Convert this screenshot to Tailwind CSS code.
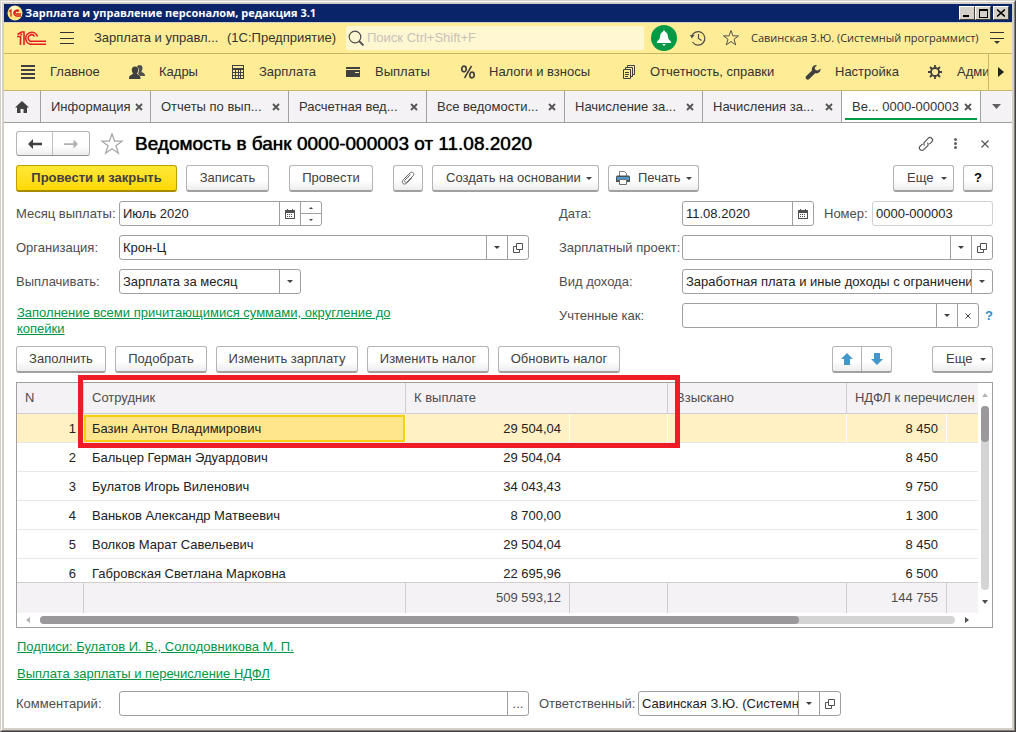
<!DOCTYPE html>
<html lang="ru">
<head>
<meta charset="utf-8">
<title>Зарплата и управление персоналом, редакция 3.1</title>
<script src="https://cdn.jsdelivr.net/npm/@tailwindcss/browser@4"></script>
</head>
<body class="flex min-h-screen flex-col border border-[#d4d0c8] border-r-[#404040] border-b-[#404040] bg-[#d4d0c8] font-['Liberation_Sans',Arial,sans-serif] text-[13px] leading-4 text-[#333333]">
<svg class="hidden">
  <symbol id="down" viewBox="0 0 6 3"><path d="M0 0h6L3 3z" fill="#404040"/></symbol>
  <symbol id="open" viewBox="0 0 10 10"><path d="M3.500.5h6v6h-6zM3.500 3.500h-3v6h6v-3" fill="none" stroke="#505050"/></symbol>
  <symbol id="cal" viewBox="0 0 10 10"><path d="M0 1h10v9H0z" fill="#505050"/><path d="M1 4h8v5H1z" fill="#fff"/><path d="M2 0h1v2H2zM7 0h1v2H7zM2 5h1v1H2zM4 5h1v1H4zM6 5h1v1H6zM2 7h1v1H2zM4 7h1v1H4zM6 7h1v1H6z" fill="#505050"/></symbol>
  <symbol id="x" viewBox="0 0 8 8"><path d="M1 1l6 6M7 1L1 7" fill="none" stroke="#555" stroke-width="1.800"/></symbol>
  <symbol id="star" viewBox="0 0 24 24"><path d="M12 2l2.600 7.200h7.400l-6 4.500 2.300 7.500L12 16.700l-6.300 4.500L8 13.700 2 9.200h7.400z" fill="none" stroke="currentColor" stroke-width="1.300"/></symbol>
</svg>

<div class="flex grow flex-col border border-white border-r-[#808080] border-b-[#808080] p-0.5">

<header>
  <div class="flex h-[18px] items-center bg-[#0a246a] pr-[3px] pl-[3px]">
    <svg class="size-4 shrink-0" viewBox="0 0 16 16"><circle cx="8" cy="8" r="7.500" fill="#ffe680"/><circle cx="7" cy="5" r="4" fill="#fff6c8"/><path d="M2 6.500l2-1.500v6.500M12 6a3 3 0 1 0-2.500 5H14M11 7a1.500 1.500 0 1 0-1.500 2H14" fill="none" stroke="#d81e1e" stroke-width="1.300"/></svg>
    <h1 class="ml-0.5 grow font-['Open_Sans','Noto_Sans',sans-serif] text-[11px] font-bold text-white">Зарплата и управление персоналом, редакция 3.1</h1>
    <button aria-label="Свернуть" class="flex h-[14px] w-4 items-end border border-white border-r-[#404040] border-b-[#404040] bg-[#d4d0c8] pb-0.5 pl-[3px]"><span class="h-0.5 w-1.5 bg-black"></span></button>
    <button aria-label="Развернуть" class="flex h-[14px] w-4 items-center justify-center border border-white border-r-[#404040] border-b-[#404040] bg-[#d4d0c8]"><span class="h-[9px] w-[9px] border border-t-2 border-black"></span></button>
    <button aria-label="Закрыть" class="ml-0.5 flex h-[14px] w-4 items-center justify-center border border-white border-r-[#404040] border-b-[#404040] bg-[#d4d0c8]"><svg class="size-2" viewBox="0 0 8 8"><path d="M0 .5l8 7M8 .5l-8 7" stroke="#000" stroke-width="1.600"/></svg></button>
  </div>

  <div class="flex h-8 items-center border-t border-b border-t-[#d4d0c8] border-b-[#c9b768] bg-[#ffec96] pr-2 pl-[13px]">
    <svg class="h-[14px] w-[29px] shrink-0" viewBox="0 0 29 14"><path d="M0.500 3.500L4.500 1h2.500v13M0 5.500h3.500V14M3.500 4L5 3M20.500 5.500A6 6 0 1 0 15 13.300h14M17.500 5.500A3.300 3.300 0 1 0 15 10.300h14" fill="none" stroke="#e31e24" stroke-width="1.600"/></svg>
    <button aria-label="Меню" class="ml-[14px] flex h-3 w-[14px] flex-col justify-between"><span class="h-px w-full bg-[#333]"></span><span class="h-px w-full bg-[#333]"></span><span class="h-px w-full bg-[#333]"></span></button>
    <span class="ml-5 w-[133px] whitespace-nowrap">Зарплата и управл...</span>
    <span class="w-[119px] whitespace-nowrap">(1С:Предприятие)</span>
    <label class="flex h-6 grow items-center rounded-xs bg-[#fff6d2] pl-0.5">
      <svg class="size-4 shrink-0" viewBox="0 0 16 16"><circle cx="7" cy="7" r="5.800" fill="none" stroke="#4d4d4d" stroke-width="1.200"/><path d="M11 11l4.500 4.500" stroke="#4d4d4d" stroke-width="1.800"/></svg>
      <input aria-label="Поиск" type="search" placeholder="Поиск Ctrl+Shift+F" class="ml-[3px] w-0 grow outline-none placeholder:text-[#c6c3b8]">
    </label>
    <button aria-label="Уведомления" class="ml-[7px] flex size-[26px] shrink-0 items-center justify-center rounded-full bg-[#009a46]"><svg class="size-4" viewBox="0 0 16 16"><path d="M8 .5c-.8 0-1 .6-1 1.200C5 2.300 4.400 4 4.200 6 4 8.500 3 10 1 11.500V13h14v-1.500C13 10 12 8.500 11.800 6 11.600 4 11 2.300 9 1.700 9 1.100 8.800.5 8 .5zM6.500 14h3c0 2-3 2-3 0z" fill="#fff"/></svg></button>
    <button aria-label="История" class="ml-[13px] shrink-0"><svg class="size-4" viewBox="0 0 16 16"><path d="M1.700 6.500A6.700 6.700 0 1 1 2.500 12M8.500 4v4.500l3 2" fill="none" stroke="#4d4d4d" stroke-width="1.200"/><path d="M0 5h4.500L1.800 8.500z" fill="#4d4d4d"/></svg></button>
    <button aria-label="Избранное" class="ml-4 shrink-0 text-[#4d4d4d]"><svg class="size-[18px]"><use href="#star"/></svg></button>
    <a href="#" class="ml-[11px] w-[229px] font-['Open_Sans','Noto_Sans',sans-serif] text-[11px] whitespace-nowrap">Савинская З.Ю. (Системный программист)</a>
    <button aria-label="Настройка панели" class="ml-2.5 shrink-0"><svg class="h-[14px] w-[14px]" viewBox="0 0 14 14"><path d="M0 1.500h14M0 7.500h14" stroke="#333"/><path d="M4 10h6l-3 3z" fill="#333"/></svg></button>
  </div>

  <nav class="flex h-[37px] items-stretch border-b border-[#c9b768] bg-[#ffec96] text-[13px]">
    <div class="grid w-0 grow grid-cols-[108px_102px_115px_115px_161px_183px_123px_60px] items-center overflow-hidden pl-[17px] whitespace-nowrap">
      <a href="#" class="flex items-center gap-[15px]"><svg class="size-[14px] shrink-0" viewBox="0 0 14 14"><path d="M0 1h14M0 5h14M0 9h14M0 13h14" stroke="#404040" stroke-width="2"/></svg>Главное</a>
      <a href="#" class="flex items-center gap-[14px]"><svg class="size-4 shrink-0" viewBox="0 0 16 16"><path d="M10.500 1c2 0 3 1 3 3s-.8 3-1 3.500c0 1 3.500 1 3.500 4v.5h-5c-.8-1.500-2-2-2-2.500C10.500 7 10 4 8 3c.3-1.300 1.200-2 2.500-2z" fill="#505050"/><path d="M6 2.500c2.300 0 3.200 1.500 3.200 3.500 0 1.500-.8 2.700-1.200 3.500 0 1.300 3.500 1.200 3.500 4.500v1H0v-1c0-3.300 4-3.200 4-4.500C3.500 8.700 2.800 7.500 2.800 6c0-2 1-3.500 3.200-3.500z" fill="#404040"/></svg>Кадры</a>
      <a href="#" class="flex items-center gap-[14px]"><svg class="size-[14px] shrink-0" viewBox="0 0 14 14"><path d="M1 0h12v14H1z" fill="#404040"/><path d="M2 1h10v2H2zM2 5h2v2H2zM5 5h2v2H5zM8 5h1v2H8zM10 5h2v2h-2zM2 8h2v2H2zM5 8h2v2H5zM8 8h1v2H8zM10 8h2v2h-2zM2 11h2v2H2zM5 11h2v2H5zM8 11h1v2H8zM10 11h2v2h-2z" fill="#ffec96"/></svg>Зарплата</a>
      <a href="#" class="flex items-center gap-[15px]"><svg class="size-[14px] shrink-0" viewBox="0 0 14 14"><path d="M0 2h14v2H0zM0 5h14v7H0z" fill="#404040"/><path d="M9 7h4v1H9z" fill="#ffec96"/></svg>Выплаты</a>
      <a href="#" class="flex items-center gap-[14px]"><svg class="size-[14px] shrink-0" viewBox="0 0 14 14"><path d="M10.500 1L3.500 13" stroke="#404040" stroke-width="1.500"/><ellipse cx="3" cy="4" rx="2.200" ry="2.800" fill="none" stroke="#404040" stroke-width="1.700"/><ellipse cx="11" cy="10" rx="2.200" ry="2.800" fill="none" stroke="#404040" stroke-width="1.700"/></svg>Налоги и взносы</a>
      <a href="#" class="flex items-center gap-[14px]"><svg class="size-[14px] shrink-0" viewBox="0 0 14 14"><path d="M1.500 4.500h7v9h-7zM3.500 4V2.500h7v9H9M5.500 2V.5h7v9H11M3 7.500h4M3 9.500h4M3 11.500h3" fill="none" stroke="#404040"/></svg>Отчетность, справки</a>
      <a href="#" class="flex items-center gap-[14px]"><svg class="size-4 shrink-0" viewBox="0 0 16 16"><path d="M15.500 4.500c.5 3-2 5.500-5.300 4.800L4 15.300c-2 1.200-4.300-1-3-3L7 6.500C6 3 9 .3 12 1L9.700 3.700l.8 2.300 2.500.5z" fill="#404040"/></svg>Настройка</a>
      <a href="#" class="flex items-center gap-[15px]"><svg class="size-[14px] shrink-0" viewBox="0 0 14 14"><circle cx="7" cy="7" r="4" fill="none" stroke="#404040" stroke-width="1.800"/><path d="M7 0v3M7 11v3M0 7h3M11 7h3M2 2l2 2M10 10l2 2M12 2l-2 2M4 10l-2 2" stroke="#404040" stroke-width="1.800"/></svg>Адми</a>
    </div>
    <button aria-label="Прокрутить разделы" class="flex w-6 shrink-0 items-center border-l border-[#c9b768] pl-[9px]"><svg class="h-[10px] w-[6px]" viewBox="0 0 6 10"><path d="M0 0l6 5-6 5z" fill="#222"/></svg></button>
  </nav>

  <nav class="flex h-8 border-b border-[#a0a0a0] bg-[#f5f2f5] whitespace-nowrap">
    <button aria-label="Начальная страница" class="flex w-[37px] shrink-0 items-center justify-center border-r border-[#a0a0a0]"><svg class="h-3 w-[14px]" viewBox="0 0 14 12"><path d="M7 0l7 6.500h-2V12H8.500V8h-3v4H2V6.500H0z" fill="#404040"/></svg></button>
    <div class="flex w-[110px] items-center justify-between border-r border-[#a0a0a0] pr-[7px] pl-[10px]"><a href="#">Информация</a><button aria-label="Закрыть вкладку"><svg class="size-2"><use href="#x"/></svg></button></div>
    <div class="flex w-[138px] items-center justify-between border-r border-[#a0a0a0] pr-2 pl-[10px]"><a href="#">Отчеты по вып...</a><button aria-label="Закрыть вкладку"><svg class="size-2"><use href="#x"/></svg></button></div>
    <div class="flex w-[138px] items-center justify-between border-r border-[#a0a0a0] pr-2 pl-[10px]"><a href="#">Расчетная вед...</a><button aria-label="Закрыть вкладку"><svg class="size-2"><use href="#x"/></svg></button></div>
    <div class="flex w-[138px] items-center justify-between border-r border-[#a0a0a0] pr-2 pl-[10px]"><a href="#">Все ведомости...</a><button aria-label="Закрыть вкладку"><svg class="size-2"><use href="#x"/></svg></button></div>
    <div class="flex w-[138px] items-center justify-between border-r border-[#a0a0a0] pr-2 pl-[10px]"><a href="#">Начисление за...</a><button aria-label="Закрыть вкладку"><svg class="size-2"><use href="#x"/></svg></button></div>
    <div class="flex w-[139px] items-center justify-between border-r border-[#a0a0a0] pr-2 pl-[10px]"><a href="#">Начисления за...</a><button aria-label="Закрыть вкладку"><svg class="size-2"><use href="#x"/></svg></button></div>
    <div class="flex w-[139px] border-r border-[#a0a0a0] bg-white px-[3px] pb-0.5"><div class="flex grow items-center justify-between border-b-2 border-[#009a46] pt-1 pr-[5px] pl-[7px]"><a href="#">Ве... 0000-000003</a><button aria-label="Закрыть вкладку"><svg class="size-2"><use href="#x"/></svg></button></div></div>
    <button aria-label="Все вкладки" class="flex grow items-center justify-center"><svg class="h-[5px] w-[9px]" viewBox="0 0 9 5"><path d="M0 0h9L4.500 5z" fill="#606060"/></svg></button>
  </nav>
</header>

<main class="flex grow flex-col bg-white pt-2 pr-[19px] pb-3 pl-3">
  <div class="flex h-[25px] items-center">
    <div class="flex h-[25px] w-[74px] rounded-[3px] border border-[#b4b4b4] border-b-[#909090] bg-linear-to-b from-white from-60% to-[#ededed]">
      <button aria-label="Назад" class="flex w-1/2 items-center justify-center border-r border-[#c0c0c0]"><svg class="h-[10px] w-[14px]" viewBox="0 0 14 10"><path d="M0 5l5-5v3.800h9v2.400H5V10z" fill="#404040"/></svg></button>
      <button aria-label="Вперед" class="flex w-1/2 items-center justify-center"><svg class="h-[10px] w-[14px]" viewBox="0 0 14 10"><path d="M14 5L9.500.5v3.800H0v1.600h9.500v3.600z" fill="#b0b0b0"/></svg></button>
    </div>
    <button aria-label="В избранное" class="ml-2.5 text-[#a8a8a8]"><svg class="size-6"><use href="#star"/></svg></button>
    <h2 class="ml-[11px] grow text-[19px] leading-6 whitespace-nowrap text-black [text-shadow:0_0_1px_#000]">Ведомость в банк 0000-000003 от 11.08.2020</h2>
    <button aria-label="Ссылка"><svg class="size-4" viewBox="0 0 16 16"><path d="M6.500 9.500c-1-1.500-.8-2.700.2-3.700l3.500-3.500c1-1 2.600-1 3.600 0s1 2.600 0 3.600L11.500 8.200M9.500 6.500c1 1.500.8 2.700-.2 3.700l-3.500 3.500c-1 1-2.600 1-3.600 0s-1-2.600 0-3.600l2.300-2.300" fill="none" stroke="#555" stroke-width="1.200"/></svg></button>
    <button aria-label="Действия" class="ml-5 flex h-[11px] w-[3px] flex-col justify-between"><span class="size-[3px] rounded-full bg-[#606060]"></span><span class="size-[3px] rounded-full bg-[#606060]"></span><span class="size-[3px] rounded-full bg-[#606060]"></span></button>
    <button aria-label="Закрыть" class="mr-1 ml-6"><svg class="size-2" viewBox="0 0 8 8"><path d="M.5.5l7 7M7.500.5l-7 7" stroke="#555" stroke-width="1.200"/></svg></button>
  </div>

  <div class="mt-[9px] flex h-[27px] whitespace-nowrap text-[#404040]">
    <button class="w-[161px] rounded-[3px] border border-[#c0a000] border-b-2 border-b-[#a88c00] bg-linear-to-b from-[#ffe833] to-[#ffd900] font-bold">Провести и закрыть</button>
    <button class="ml-[9px] w-[83px] rounded-[3px] border border-b-2 border-[#b4b4b4] border-b-[#a0a0a0] bg-linear-to-b from-white from-60% to-[#ededed]">Записать</button>
    <button class="ml-5 w-[84px] rounded-[3px] border border-b-2 border-[#b4b4b4] border-b-[#a0a0a0] bg-linear-to-b from-white from-60% to-[#ededed]">Провести</button>
    <button aria-label="Файлы" class="ml-5 flex w-[30px] items-center justify-center rounded-[3px] border border-b-2 border-[#b4b4b4] border-b-[#a0a0a0] bg-linear-to-b from-white from-60% to-[#ededed]"><svg class="size-[14px]" viewBox="0 0 14 14"><path d="M9.500 3.500L4 9c-.8.800-.5 1.500 0 2s1.300.6 2 0l6-6c1-1 1-2.300.2-3.200s-2.200-.8-3.200.2L2.500 8.500C1 10 1 11.700 2 12.500s2.500.8 3.700-.4L11 6.800" fill="none" stroke="#666" stroke-width="1"/></svg></button>
    <button class="ml-[9px] flex w-[167px] items-center justify-between rounded-[3px] border border-b-2 border-[#b4b4b4] border-b-[#a0a0a0] bg-linear-to-b from-white from-60% to-[#ededed] pr-[6px] pl-[13px]">Создать на основании<svg class="h-[3px] w-[6px]"><use href="#down"/></svg></button>
    <button class="ml-[9px] flex w-[91px] items-center rounded-[3px] border border-b-2 border-[#b4b4b4] border-b-[#a0a0a0] bg-linear-to-b from-white from-60% to-[#ededed] pr-[6px] pl-[7px]"><svg class="h-[14px] w-[14px]" viewBox="0 0 14 14"><path d="M3.500 5V.5h5l2 2V5" fill="#fff" stroke="#808080"/><path d="M1 4.500h12l1 1V11H0V5.500z" fill="#505050"/><path d="M1 6h12v3H1z" fill="#4a9cd0"/><path d="M3.500 8.500h7v5h-7z" fill="#fff" stroke="#707070"/></svg><span class="ml-2 grow text-left">Печать</span><svg class="h-[3px] w-[6px]"><use href="#down"/></svg></button>
    <button class="ml-auto flex w-[61px] items-center justify-between rounded-[3px] border border-b-2 border-[#b4b4b4] border-b-[#a0a0a0] bg-linear-to-b from-white from-60% to-[#ededed] pr-[6px] pl-[13px]">Еще<svg class="h-[3px] w-[6px]"><use href="#down"/></svg></button>
    <button class="ml-[9px] w-[30px] rounded-[3px] border border-b-2 border-[#b4b4b4] border-b-[#a0a0a0] bg-linear-to-b from-white from-60% to-[#ededed] font-bold text-black">?</button>
  </div>

  <form class="mt-[9px] flex gap-[30px] whitespace-nowrap text-[#4d4d4d]">
    <div class="grid w-[513px] grid-cols-[103px_1fr] content-start items-center gap-y-[9px]">
      <label for="month">Месяц выплаты:</label>
      <div class="flex h-[25px] w-[203px] overflow-hidden rounded-[3px] border border-[#a0a0a0]">
        <input id="month" value="Июль 2020" class="w-0 grow px-[3px] text-[#222] outline-none">
        <button type="button" aria-label="Календарь" class="flex w-[21px] items-center justify-center border-l border-[#a0a0a0]"><svg class="size-2.5"><use href="#cal"/></svg></button>
        <div class="flex w-[21px] flex-col border-l border-[#a0a0a0]">
          <button type="button" aria-label="Больше" class="flex grow items-center justify-center border-b border-[#a0a0a0]"><svg class="h-0.5 w-1" viewBox="0 0 4 2"><path d="M0 2h4L2 0z" fill="#404040"/></svg></button>
          <button type="button" aria-label="Меньше" class="flex grow items-center justify-center"><svg class="h-0.5 w-1" viewBox="0 0 4 2"><path d="M0 0h4L2 2z" fill="#404040"/></svg></button>
        </div>
      </div>
      <label for="org">Организация:</label>
      <div class="flex h-[25px] w-[410px] overflow-hidden rounded-[3px] border border-[#a0a0a0]">
        <input id="org" value="Крон-Ц" class="w-0 grow px-[3px] text-[#222] outline-none">
        <button type="button" aria-label="Выбрать" class="flex w-[21px] items-center justify-center border-l border-[#a0a0a0]"><svg class="h-[3px] w-[6px]"><use href="#down"/></svg></button>
        <button type="button" aria-label="Открыть" class="flex w-[21px] items-center justify-center border-l border-[#a0a0a0]"><svg class="size-2.5"><use href="#open"/></svg></button>
      </div>
      <label for="pay">Выплачивать:</label>
      <div class="flex h-[25px] w-[182px] overflow-hidden rounded-[3px] border border-[#a0a0a0]">
        <select id="pay" class="w-0 grow appearance-none px-[3px] text-[#222] outline-none"><option>Зарплата за месяц</option></select>
        <span class="pointer-events-none flex w-[21px] items-center justify-center border-l border-[#a0a0a0]"><svg class="h-[3px] w-[6px]"><use href="#down"/></svg></span>
      </div>
      <a href="#" class="col-span-2 max-w-[380px] pt-0.5 pl-px whitespace-normal text-[#009646] underline">Заполнение всеми причитающимися суммами, округление до копейки</a>
    </div>
    <div class="grid grow grid-cols-[123px_1fr] content-start items-center gap-y-[9px]">
      <label for="date">Дата:</label>
      <div class="flex items-center">
        <div class="flex h-[25px] w-[132px] shrink-0 overflow-hidden rounded-[3px] border border-[#a0a0a0]">
          <input id="date" value="11.08.2020" class="w-0 grow px-[3px] text-[#222] outline-none">
          <button type="button" aria-label="Календарь" class="flex w-[21px] items-center justify-center border-l border-[#a0a0a0]"><svg class="size-2.5"><use href="#cal"/></svg></button>
        </div>
        <label for="num" class="ml-2.5 w-12">Номер:</label>
        <input id="num" value="0000-000003" class="h-[25px] w-0 grow rounded-[3px] border border-[#d0d0d0] px-[3px] text-[#222] outline-none">
      </div>
      <label for="proj">Зарплатный проект:</label>
      <div class="flex h-[25px] overflow-hidden rounded-[3px] border border-[#a0a0a0]">
        <input id="proj" class="w-0 grow px-[3px] text-[#222] outline-none">
        <button type="button" aria-label="Выбрать" class="flex w-[21px] items-center justify-center border-l border-[#a0a0a0]"><svg class="h-[3px] w-[6px]"><use href="#down"/></svg></button>
        <button type="button" aria-label="Открыть" class="flex w-[21px] items-center justify-center border-l border-[#a0a0a0]"><svg class="size-2.5"><use href="#open"/></svg></button>
      </div>
      <label for="kind">Вид дохода:</label>
      <div class="flex h-[25px] overflow-hidden rounded-[3px] border border-[#a0a0a0]">
        <input id="kind" value="Заработная плата и иные доходы с ограничением взыскания" class="w-0 grow pl-[3px] text-[#222] outline-none">
        <button type="button" aria-label="Выбрать" class="flex w-[21px] items-center justify-center border-l border-[#a0a0a0]"><svg class="h-[3px] w-[6px]"><use href="#down"/></svg></button>
      </div>
      <label for="acc">Учтенные как:</label>
      <div class="flex items-center">
        <div class="flex h-[25px] grow overflow-hidden rounded-[3px] border border-[#a0a0a0]">
          <input id="acc" class="w-0 grow px-[3px] text-[#222] outline-none">
          <button type="button" aria-label="Выбрать" class="flex w-[21px] items-center justify-center border-l border-[#a0a0a0]"><svg class="h-[3px] w-[6px]"><use href="#down"/></svg></button>
          <button type="button" aria-label="Очистить" class="flex w-[21px] items-center justify-center border-l border-[#a0a0a0]"><svg class="size-1.5" viewBox="0 0 6 6"><path d="M.5.5l5 5M5.500.5l-5 5" stroke="#404040"/></svg></button>
        </div>
        <button type="button" class="w-[14px] pl-1.5 font-bold text-[#3090c8]">?</button>
      </div>
    </div>
  </form>

  <div class="mt-[9px] flex h-[27px] gap-[9px] whitespace-nowrap text-[#404040]">
    <button class="w-[90px] rounded-[3px] border border-b-2 border-[#b4b4b4] border-b-[#a0a0a0] bg-linear-to-b from-white from-60% to-[#ededed]">Заполнить</button>
    <button class="w-[92px] rounded-[3px] border border-b-2 border-[#b4b4b4] border-b-[#a0a0a0] bg-linear-to-b from-white from-60% to-[#ededed]">Подобрать</button>
    <button class="w-[142px] rounded-[3px] border border-b-2 border-[#b4b4b4] border-b-[#a0a0a0] bg-linear-to-b from-white from-60% to-[#ededed]">Изменить зарплату</button>
    <button class="w-[122px] rounded-[3px] border border-b-2 border-[#b4b4b4] border-b-[#a0a0a0] bg-linear-to-b from-white from-60% to-[#ededed]">Изменить налог</button>
    <button class="w-[122px] rounded-[3px] border border-b-2 border-[#b4b4b4] border-b-[#a0a0a0] bg-linear-to-b from-white from-60% to-[#ededed]">Обновить налог</button>
    <div class="mr-[31px] ml-auto flex w-[60px] rounded-[3px] border border-b-2 border-[#b4b4b4] border-b-[#a0a0a0] bg-linear-to-b from-white from-60% to-[#ededed]">
      <button aria-label="Вверх" class="flex w-1/2 items-center justify-center border-r border-[#b4b4b4]"><svg class="size-3" viewBox="0 0 12 12"><path d="M6 0l6 6H9v6H3V6H0z" fill="#4298cc"/></svg></button>
      <button aria-label="Вниз" class="flex w-1/2 items-center justify-center"><svg class="size-3" viewBox="0 0 12 12"><path d="M6 12L0 6h3V0h6v6h3z" fill="#4298cc"/></svg></button>
    </div>
    <button class="flex w-[61px] items-center justify-between rounded-[3px] border border-b-2 border-[#b4b4b4] border-b-[#a0a0a0] bg-linear-to-b from-white from-60% to-[#ededed] pr-[6px] pl-[13px]">Еще<svg class="h-[3px] w-[6px]"><use href="#down"/></svg></button>
  </div>

  <section class="relative mt-[9px] border border-[#a0a0a0]">
    <div class="flex">
      <table class="w-0 grow table-fixed border-separate border-spacing-0 whitespace-nowrap">
        <colgroup><col class="w-[67px]"><col class="w-[322px]"><col class="w-[164px]"><col class="w-[98px]"><col><col class="w-[100px]"><col class="w-[31px]"></colgroup>
        <thead>
          <tr class="h-[31px] bg-[#f5f2f5] text-left text-[#4d4d4d]">
            <th class="border-r border-b border-[#d0cdd0] pl-2 font-normal">N</th>
            <th class="border-r border-b border-[#d0cdd0] pl-2 font-normal">Сотрудник</th>
            <th colspan="2" class="border-r border-b border-[#d0cdd0] pl-2 font-normal">К выплате</th>
            <th class="border-r border-b border-[#d0cdd0] pl-2 font-normal">Взыскано</th>
            <th colspan="2" class="overflow-hidden border-b border-[#d0cdd0] pl-2 font-normal">НДФЛ к перечислен</th>
          </tr>
        </thead>
        <tbody class="text-right text-[#222]">
          <tr class="h-[29px] bg-[#fff1c4]">
            <td class="border-b border-[#e8e8e8] pt-0.5 pr-2">1</td>
            <td class="border-r border-b border-r-white border-b-[#e8e8e8] p-0 text-left"><div class="flex h-[27px] items-center border-2 border-[#f8cf10] bg-[#ffe68c] pt-px pl-1.5">Базин Антон Владимирович</div></td>
            <td class="border-r border-b border-r-white border-b-[#e8e8e8] pt-0.5 pr-2">29 504,04</td><td class="border-r border-b border-r-white border-b-[#e8e8e8]"></td><td class="border-r border-b border-r-white border-b-[#e8e8e8]"></td><td class="border-r border-b border-r-white border-b-[#e8e8e8] pt-0.5 pr-2">8 450</td><td class="border-b border-[#e8e8e8]"></td>
          </tr>
          <tr class="h-[29px]"><td class="border-b border-[#e8e8e8] pt-0.5 pr-2">2</td><td class="border-b border-[#e8e8e8] pt-0.5 pl-2 text-left">Бальцер Герман Эдуардович</td><td class="border-b border-[#e8e8e8] pt-0.5 pr-[9px]">29 504,04</td><td colspan="2" class="border-b border-[#e8e8e8]"></td><td class="border-b border-[#e8e8e8] pt-0.5 pr-[9px]">8 450</td><td class="border-b border-[#e8e8e8]"></td></tr>
          <tr class="h-[29px]"><td class="border-b border-[#e8e8e8] pt-0.5 pr-2">3</td><td class="border-b border-[#e8e8e8] pt-0.5 pl-2 text-left">Булатов Игорь Виленович</td><td class="border-b border-[#e8e8e8] pt-0.5 pr-[9px]">34 043,43</td><td colspan="2" class="border-b border-[#e8e8e8]"></td><td class="border-b border-[#e8e8e8] pt-0.5 pr-[9px]">9 750</td><td class="border-b border-[#e8e8e8]"></td></tr>
          <tr class="h-[29px]"><td class="border-b border-[#e8e8e8] pt-0.5 pr-2">4</td><td class="border-b border-[#e8e8e8] pt-0.5 pl-2 text-left">Ваньков Александр Матвеевич</td><td class="border-b border-[#e8e8e8] pt-0.5 pr-[9px]">8 700,00</td><td colspan="2" class="border-b border-[#e8e8e8]"></td><td class="border-b border-[#e8e8e8] pt-0.5 pr-[9px]">1 300</td><td class="border-b border-[#e8e8e8]"></td></tr>
          <tr class="h-[29px]"><td class="border-b border-[#e8e8e8] pt-0.5 pr-2">5</td><td class="border-b border-[#e8e8e8] pt-0.5 pl-2 text-left">Волков Марат Савельевич</td><td class="border-b border-[#e8e8e8] pt-0.5 pr-[9px]">29 504,04</td><td colspan="2" class="border-b border-[#e8e8e8]"></td><td class="border-b border-[#e8e8e8] pt-0.5 pr-[9px]">8 450</td><td class="border-b border-[#e8e8e8]"></td></tr>
          <tr class="h-[23px] align-bottom"><td class="pr-2">6</td><td class="pl-2 text-left">Габровская Светлана Марковна</td><td class="pr-[9px]">22 695,96</td><td colspan="2"></td><td class="pr-[9px]">6 500</td><td></td></tr>
        </tbody>
        <tfoot>
          <tr class="h-[31px] bg-[#f5f2f5] text-right text-[#4d4d4d]">
            <td class="border-t border-r border-[#d0cdd0]"></td><td class="border-t border-r border-[#d0cdd0]"></td><td class="border-t border-r border-[#d0cdd0] pr-2">509 593,12</td><td class="border-t border-r border-[#d0cdd0]"></td><td class="border-t border-r border-[#d0cdd0]"></td><td class="border-t border-r border-[#d0cdd0] pr-2">144 755</td><td class="border-t border-[#d0cdd0]"></td>
          </tr>
        </tfoot>
      </table>
      <div class="flex w-[14px] flex-col items-center pt-2.5 pb-[9px]">
        <svg class="h-1 w-1.5" viewBox="0 0 6 4"><path d="M0 4h6L3 0z" fill="#b4b4b4"/></svg>
        <div class="mt-[9px] w-2 grow rounded-full bg-[#d4d4d4]"><div class="h-9 rounded-full bg-[#9a989a]"></div></div>
        <svg class="mt-2.5 h-1 w-1.5" viewBox="0 0 6 4"><path d="M0 0h6L3 4z" fill="#505050"/></svg>
      </div>
    </div>
    <div class="flex h-[14px] items-center pr-[23px] pl-[9px]">
      <svg class="h-1.5 w-1" viewBox="0 0 4 6"><path d="M4 0v6L0 3z" fill="#b4b4b4"/></svg>
      <div class="ml-2.5 h-2 grow rounded-full bg-[#d4d4d4]"><div class="h-2 w-[83%] rounded-full bg-[#9a989a]"></div></div>
      <svg class="ml-2.5 h-1.5 w-1" viewBox="0 0 4 6"><path d="M0 0v6l4-3z" fill="#505050"/></svg>
    </div>
    <div class="pointer-events-none absolute -top-2 left-[61px] h-[73px] w-[602px] border-5 border-[#ee1c24]"></div>
  </section>

  <div class="mt-[11px] flex flex-col items-start gap-[11px] pl-px text-[#009646] underline">
    <a href="#">Подписи: Булатов И. В., Солодовникова М. П.</a>
    <a href="#">Выплата зарплаты и перечисление НДФЛ</a>
  </div>

  <div class="mt-[9px] flex items-center whitespace-nowrap text-[#4d4d4d]">
    <label for="comment" class="w-[103px]">Комментарий:</label>
    <div class="flex h-[25px] w-[410px] overflow-hidden rounded-[3px] border border-[#a0a0a0]">
      <input id="comment" class="w-0 grow px-[3px] text-[#222] outline-none">
      <button type="button" class="w-[21px] border-l border-[#a0a0a0]">...</button>
    </div>
    <label for="resp" class="ml-2.5 w-[99px]">Ответственный:</label>
    <div class="flex h-[25px] w-[203px] overflow-hidden rounded-[3px] border border-[#a0a0a0]">
      <input id="resp" value="Савинская З.Ю. (Системный программист)" class="w-0 grow pl-[3px] text-[#222] outline-none">
      <button type="button" aria-label="Выбрать" class="flex w-[21px] items-center justify-center border-l border-[#a0a0a0]"><svg class="h-[3px] w-[6px]"><use href="#down"/></svg></button>
      <button type="button" aria-label="Открыть" class="flex w-[21px] items-center justify-center border-l border-[#a0a0a0]"><svg class="size-2.5"><use href="#open"/></svg></button>
    </div>
  </div>
</main>
</div>
</body>
</html>
